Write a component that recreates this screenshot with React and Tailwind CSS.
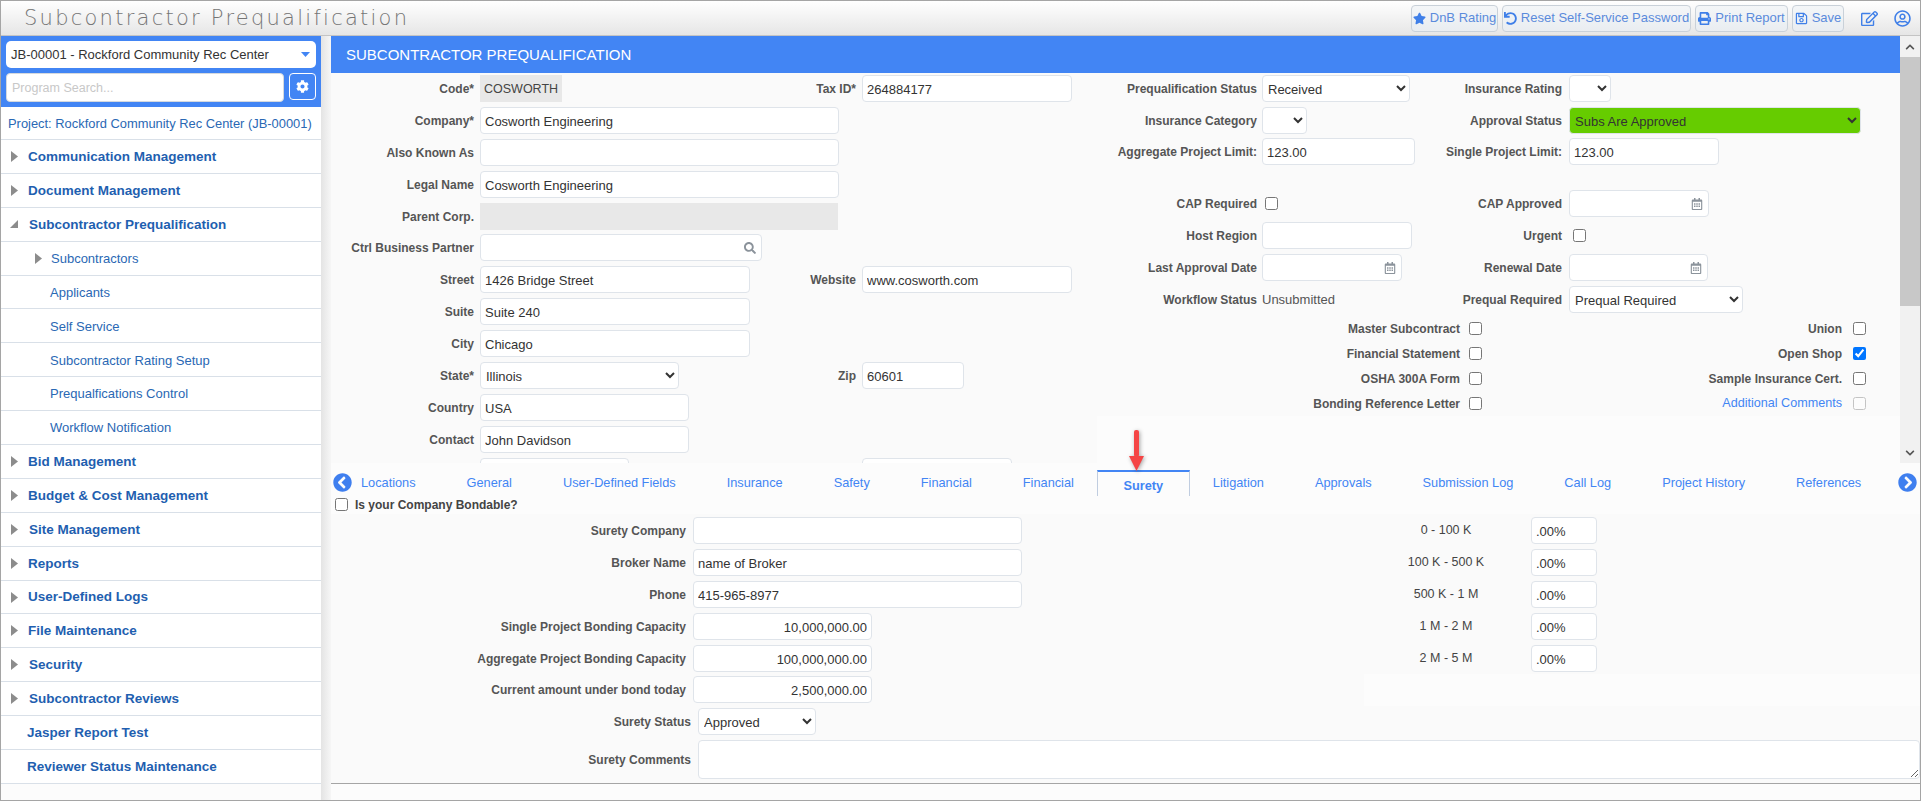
import {
  FaStar, FaUndo, FaPrint, FaRegSave, FaRegEdit, FaRegUserCircle, FaCog,
  FaSearch, FaRegCalendarAlt, FaChevronCircleLeft, FaChevronCircleRight,
  FaChevronUp, FaChevronDown,
} from 'react-icons/fa';

const groupRow = 'font-bold text-[13.5px] text-[#1f5fb0]';
const subRow = 'text-[13px] text-[#2a68b4]';

const NAV = [
  { label: 'Communication Management', arrow: 'right', x: 'pl-[27px]', cls: groupRow },
  { label: 'Document Management', arrow: 'right', x: 'pl-[27px]', cls: groupRow },
  { label: 'Subcontractor Prequalification', arrow: 'open', x: 'pl-[28px]', cls: groupRow },
  { label: 'Subcontractors', arrow: 'sub', x: 'pl-[50px]', cls: subRow },
  { label: 'Applicants', x: 'pl-[49px]', cls: subRow },
  { label: 'Self Service', x: 'pl-[49px]', cls: subRow },
  { label: 'Subcontractor Rating Setup', x: 'pl-[49px]', cls: subRow },
  { label: 'Prequalfications Control', x: 'pl-[49px]', cls: subRow },
  { label: 'Workflow Notification', x: 'pl-[49px]', cls: subRow },
  { label: 'Bid Management', arrow: 'right', x: 'pl-[27px]', cls: groupRow },
  { label: 'Budget & Cost Management', arrow: 'right', x: 'pl-[27px]', cls: groupRow },
  { label: 'Site Management', arrow: 'right', x: 'pl-[28px]', cls: groupRow },
  { label: 'Reports', arrow: 'right', x: 'pl-[27px]', cls: groupRow },
  { label: 'User-Defined Logs', arrow: 'right', x: 'pl-[27px]', cls: groupRow },
  { label: 'File Maintenance', arrow: 'right', x: 'pl-[27px]', cls: groupRow },
  { label: 'Security', arrow: 'right', x: 'pl-[28px]', cls: groupRow },
  { label: 'Subcontractor Reviews', arrow: 'right', x: 'pl-[28px]', cls: groupRow },
  { label: 'Jasper Report Test', x: 'pl-[26px]', cls: groupRow },
  { label: 'Reviewer Status Maintenance', x: 'pl-[26px]', cls: groupRow },
];

const TABS = ['Locations', 'General', 'User-Defined Fields', 'Insurance', 'Safety', 'Financial', 'Financial', 'Surety', 'Litigation', 'Approvals', 'Submission Log', 'Call Log', 'Project History', 'References'];

const NavArrow = ({ kind }) => {
  if (kind === 'open') {
    return (
      <svg className="absolute left-[9px] top-[12px]" width="8" height="8" viewBox="0 0 8 8">
        <polygon points="8,0 8,8 0,8" fill="#8c8c8c" />
      </svg>
    );
  }
  return (
    <svg className={`absolute top-[11px] ${kind === 'sub' ? 'left-[34px]' : 'left-[10px]'}`} width="7" height="11" viewBox="0 0 7 11">
      <polygon points="0,0 7,5.5 0,11" fill="#8c8c8c" />
    </svg>
  );
};

const Label = ({ children, className = '' }) => (
  <div className={`h-[27px] leading-[28px] text-right font-bold text-[12px] text-[#555] whitespace-nowrap ${className}`}>
    {children}
  </div>
);

const Input = ({ value = '', w, right, icon: Icon }) => (
  <div className={`relative ${w}`}>
    <input
      readOnly
      value={value}
      className={`block w-full h-[27px] rounded-[4px] border border-[#dfe4ea] bg-white px-[4px] pt-[2px] text-[13px] text-[#333] outline-none ${right ? 'text-right' : ''}`}
    />
    {Icon && (
      <span className="absolute right-[6px] top-[8px] text-[#8b939b]">
        <Icon size={12} />
      </span>
    )}
  </div>
);

const Select = ({ value = '', w, className = 'bg-white' }) => (
  <select
    defaultValue={value}
    className={`block h-[27px] rounded-[4px] border border-[#dfe4ea] pl-[1px] pt-[2px] text-[13px] text-[#333] outline-none ${w} ${className}`}
  >
    <option value={value}>{value}</option>
  </select>
);

const Check = ({ checked, faded }) => (
  <input type="checkbox" defaultChecked={checked} className={`block w-[13px] h-[13px] ${faded ? 'opacity-40' : ''}`} />
);

const ToolButton = ({ icon: Icon, children, w }) => (
  <button className={`${w} h-[27px] flex items-center justify-center gap-[4px] rounded-[4px] border border-[#c9d1d9] bg-gradient-to-b from-[#f4f6f8] to-[#e9edf1] text-[13px] text-[#5b8bdc] whitespace-nowrap`}>
    <Icon size={13} className="text-[#3f7fe8]" />
    {children}
  </button>
);

const Sidebar = () => (
  <aside className="w-[320px] shrink-0 flex flex-col bg-[#fcfcfc]">
    <div className="h-[71px] bg-[#4285f4] p-[5px]">
      <div className="relative h-[27px] rounded-[5px] bg-white pl-[5px] text-[13px] leading-[28px] text-[#333]">
        JB-00001 - Rockford Community Rec Center
        <svg className="absolute right-[6px] top-[11px]" width="9" height="5" viewBox="0 0 9 5">
          <polygon points="0,0 9,0 4.5,5" fill="#4285f4" />
        </svg>
      </div>
      <div className="flex gap-[5px] mt-[5px]">
        <input
          readOnly
          placeholder="Program Search..."
          className="w-[278px] h-[29px] rounded-[4px] border border-[#d5d9de] bg-white px-[5px] text-[12.5px] outline-none placeholder:text-[#c8c8c8]"
        />
        <div className="w-[27px] h-[27px] rounded-[4px] border border-white flex items-center justify-center text-white">
          <FaCog size={13} />
        </div>
      </div>
    </div>
    <div className="h-[33px] bg-white border-b border-[#d9e0e8] pl-[7px] text-[12.9px] leading-[33px] text-[#2a68b4] whitespace-nowrap">
      Project: Rockford Community Rec Center (JB-00001)
    </div>
    {NAV.map((n) => (
      <div key={n.label} className={`relative h-[33.9px] bg-white border-b border-[#d9e0e8] flex items-center pt-[1px] shrink-0 ${n.x} ${n.cls}`}>
        {n.arrow && <NavArrow kind={n.arrow} />}
        {n.label}
      </div>
    ))}
  </aside>
);

const FormLeft = () => (
  <div className="w-[766px] shrink-0 bg-[#fafafa] pt-[2px] grid grid-cols-[143px_270px_100px_210px] auto-rows-[31.9px] gap-x-[6px]">
    <Label>Code*</Label>
    <div className="h-[27px] w-[82px] bg-[#e8e8e8] pl-[4px] text-[12.5px] leading-[28px] text-[#444]">COSWORTH</div>
    <Label>Tax ID*</Label>
    <Input value="264884177" w="w-[210px]" />

    <Label>Company*</Label>
    <div className="col-span-3"><Input value="Cosworth Engineering" w="w-[359px]" /></div>

    <Label>Also Known As</Label>
    <div className="col-span-3"><Input w="w-[359px]" /></div>

    <Label>Legal Name</Label>
    <div className="col-span-3"><Input value="Cosworth Engineering" w="w-[359px]" /></div>

    <Label>Parent Corp.</Label>
    <div className="col-span-3 h-[27px] w-[358px] bg-[#e8e8e8]" />

    <Label>Ctrl Business Partner</Label>
    <div className="col-span-3"><Input w="w-[282px]" icon={FaSearch} /></div>

    <Label>Street</Label>
    <Input value="1426 Bridge Street" w="w-[270px]" />
    <Label>Website</Label>
    <Input value="www.cosworth.com" w="w-[210px]" />

    <Label>Suite</Label>
    <div className="col-span-3"><Input value="Suite 240" w="w-[270px]" /></div>

    <Label>City</Label>
    <div className="col-span-3"><Input value="Chicago" w="w-[270px]" /></div>

    <Label>State*</Label>
    <Select value="Illinois" w="w-[199px]" />
    <Label>Zip</Label>
    <Input value="60601" w="w-[102px]" />

    <Label>Country</Label>
    <div className="col-span-3"><Input value="USA" w="w-[209px]" /></div>

    <Label>Contact</Label>
    <div className="col-span-3"><Input value="John Davidson" w="w-[209px]" /></div>

    <div />
    <Input w="w-[149px]" />
    <div />
    <Input w="w-[150px]" />
  </div>
);

const CheckRow = ({ left, right, rightChecked, link }) => (
  <div className="h-[25px] flex items-center">
    <div className="w-[363px] text-right font-bold text-[12px] text-[#555]">{left}</div>
    <div className="ml-[9px]"><Check /></div>
    <div className={`w-[360px] text-right ${link ? 'text-[12.6px] text-[#4285f4]' : 'text-[12px] font-bold text-[#555]'}`}>{right}</div>
    <div className="ml-[11px]"><Check checked={rightChecked} faded={link} /></div>
  </div>
);

const FormRight = () => (
  <div className="flex-1 self-start bg-[#fafafa] pt-[2px]">
    <div className="grid grid-cols-[165px_150px_157px_1fr] grid-rows-[32px_31px_32px_20px_32px_32px_32px_30px]">
      <Label className="pr-[5px]">Prequalification Status</Label>
      <Select value="Received" w="w-[148px]" />
      <Label className="pr-[7px]">Insurance Rating</Label>
      <Select w="w-[42px]" />

      <Label className="pr-[5px]">Insurance Category</Label>
      <Select w="w-[45px]" />
      <Label className="pr-[7px]">Approval Status</Label>
      <Select value="Subs Are Approved" w="w-[292px]" className="bg-[#66cc00]" />

      <Label className="pr-[5px]">Aggregate Project Limit:</Label>
      <Input value="123.00" w="w-[153px]" />
      <Label className="pr-[7px]">Single Project Limit:</Label>
      <Input value="123.00" w="w-[150px]" />

      <div className="col-span-4" />

      <Label className="pr-[5px]">CAP Required</Label>
      <div className="h-[27px] flex items-center pl-[3px]"><Check /></div>
      <Label className="pr-[7px]">CAP Approved</Label>
      <Input w="w-[140px]" icon={FaRegCalendarAlt} />

      <Label className="pr-[5px]">Host Region</Label>
      <Input w="w-[150px]" />
      <Label className="pr-[7px]">Urgent</Label>
      <div className="h-[27px] flex items-center pl-[4px]"><Check /></div>

      <Label className="pr-[5px]">Last Approval Date</Label>
      <Input w="w-[140px]" icon={FaRegCalendarAlt} />
      <Label className="pr-[7px]">Renewal Date</Label>
      <Input w="w-[139px]" icon={FaRegCalendarAlt} />

      <Label className="pr-[5px]">Workflow Status</Label>
      <div className="h-[27px] leading-[28px] text-[13px] text-[#555]">Unsubmitted</div>
      <Label className="pr-[7px]">Prequal Required</Label>
      <Select value="Prequal Required" w="w-[174px]" />
    </div>
    <CheckRow left="Master Subcontract" right="Union" />
    <CheckRow left="Financial Statement" right="Open Shop" rightChecked />
    <CheckRow left="OSHA 300A Form" right="Sample Insurance Cert." />
    <CheckRow left="Bonding Reference Letter" right="Additional Comments" link />
  </div>
);

const Scrollbar = () => (
  <div className="w-[20px] shrink-0 bg-[#f1f1f1] flex flex-col">
    <div className="h-[21px] flex items-center justify-center text-[#555]">
      <FaChevronUp size={10} />
    </div>
    <div className="h-[249px] bg-[#c8c8c8]" />
    <div className="flex-1 flex items-end justify-center pb-[5px] text-[#555]">
      <FaChevronDown size={10} />
    </div>
  </div>
);

const TabStrip = () => (
  <div className="h-[51px] shrink-0 bg-[#fcfcfc]">
    <div className="pt-[6px] pl-[2px] pr-[3px] h-[32px] flex items-center">
      <FaChevronCircleLeft size={19} className="text-[#3f7fef] shrink-0" />
      <div className="ml-[9px] flex gap-[51px] text-[12.75px] text-[#4285f4] whitespace-nowrap">
        {TABS.map((t, i) =>
          t === 'Surety' ? (
            <div key={i} className="-mx-[28px] mt-[1px] h-[26px] w-[93px] text-center font-bold leading-[28px] border-t-2 border-x border-t-[#4285f4] border-x-[#c0cde0]">
              {t}
            </div>
          ) : (
            <div key={i} className="h-[26px] leading-[28px]">{t}</div>
          )
        )}
      </div>
      <FaChevronCircleRight size={19} className="ml-auto text-[#3f7fef] shrink-0" />
    </div>
    <div className="h-[19px] pl-[4px] flex items-center gap-[7px]">
      <Check />
      <span className="font-bold text-[12px] text-[#444]">Is your Company Bondable?</span>
    </div>
  </div>
);

const SuretySection = () => (
  <div className="flex-1 bg-[#fafafa] pt-[3px] min-h-0">
    <div className="flex">
      <div className="w-[691px] shrink-0 grid grid-cols-[355px_329px] auto-rows-[31.9px] gap-x-[7px]">
        <Label>Surety Company</Label>
        <Input w="w-[329px]" />
        <Label>Broker Name</Label>
        <Input value="name of Broker" w="w-[329px]" />
        <Label>Phone</Label>
        <Input value="415-965-8977" w="w-[329px]" />
        <Label>Single Project Bonding Capacity</Label>
        <Input value="10,000,000.00" w="w-[179px]" right />
        <Label>Aggregate Project Bonding Capacity</Label>
        <Input value="100,000,000.00" w="w-[179px]" right />
        <Label>Current amount under bond today</Label>
        <Input value="2,500,000.00" w="w-[179px]" right />
      </div>
      <div className="ml-[342px] flex-1">
        <div className="pl-[7px] grid grid-cols-[150px_66px] auto-rows-[31.9px] gap-x-[10px] text-[12.5px] text-[#444]">
          {['0 - 100 K', '100 K - 500 K', '500 K - 1 M', '1 M - 2 M', '2 M - 5 M'].map((r) => (
            <div key={r} className="contents">
              <div className="h-[27px] leading-[27px] text-center">{r}</div>
              <Input value=".00%" w="w-[66px]" />
            </div>
          ))}
        </div>
        <div className="-mt-[2px] h-[32px] bg-[#fcfcfc]" />
      </div>
    </div>
    <div className="flex h-[31.9px] gap-[7px]">
      <Label className="w-[360px] shrink-0">Surety Status</Label>
      <Select value="Approved" w="w-[118px]" />
    </div>
    <div className="flex items-center gap-[7px]">
      <Label className="w-[360px] shrink-0">Surety Comments</Label>
      <textarea readOnly className="flex-1 h-[39px] rounded-[4px] border border-[#dfe4ea] bg-white outline-none" />
    </div>
  </div>
);

export default function App() {
  return (
    <div className="h-screen w-full flex flex-col overflow-hidden border border-[#a5a5a5] bg-[#fcfcfc] font-['Liberation_Sans',Arial,sans-serif]">
      <header className="h-[35px] shrink-0 flex items-center bg-gradient-to-b from-white to-[#e6e6e6] border-b border-[#c4c4c4]">
        <div className="pl-[23px] pt-[1px] text-[21px] tracking-[2.25px] text-[#757575] font-['DejaVu_Sans',sans-serif] font-extralight whitespace-nowrap">
          Subcontractor Prequalification
        </div>
        <div className="ml-auto flex items-center gap-[4px]">
          <ToolButton icon={FaStar} w="w-[87px]">DnB Rating</ToolButton>
          <ToolButton icon={FaUndo} w="w-[189px]">Reset Self-Service Password</ToolButton>
          <ToolButton icon={FaPrint} w="w-[93px]">Print Report</ToolButton>
          <ToolButton icon={FaRegSave} w="w-[52px]">Save</ToolButton>
        </div>
        <div className="ml-[17px] mr-[9px] flex items-center gap-[16px] text-[#3f7fe8]">
          <FaRegEdit size={17} />
          <FaRegUserCircle size={17} />
        </div>
      </header>
      <div className="flex-1 flex min-h-0">
        <Sidebar />
        <div className="w-[10px] shrink-0 bg-gradient-to-r from-[#e4e4e4] to-[#f6f6f6]" />
        <main className="relative flex-1 min-w-0 flex flex-col">
          <div className="h-[427px] shrink-0 flex overflow-hidden">
            <div className="flex-1 min-w-0">
              <div className="h-[37px] bg-[#4285f4] pl-[15px] text-[15px] leading-[37px] text-white">
                SUBCONTRACTOR PREQUALIFICATION
              </div>
              <div className="flex h-[390px]">
                <FormLeft />
                <FormRight />
              </div>
            </div>
            <Scrollbar />
          </div>
          <TabStrip />
          <SuretySection />
          <div className="h-[17px] shrink-0 border-t border-[#a5a5a5] bg-[#fcfcfc]" />
          <svg className="absolute left-[798px] top-[394px] drop-shadow-[1px_1px_2px_rgba(0,0,0,0.35)]" width="15" height="41" viewBox="0 0 15 41">
            <rect x="5" y="0" width="5" height="27" rx="2" fill="#f54545" />
            <polygon points="0,26 15,26 7.5,41" fill="#f54545" />
          </svg>
        </main>
      </div>
    </div>
  );
}
